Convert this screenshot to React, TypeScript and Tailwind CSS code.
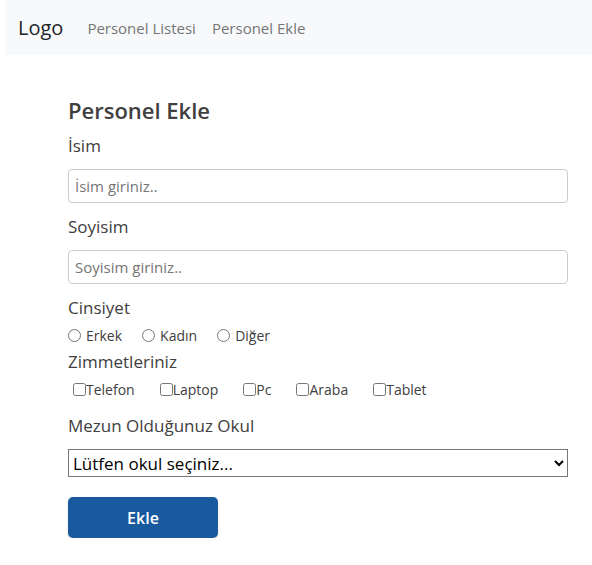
import React from "react";

const genders = ["Erkek", "Kadın", "Diğer"];
const assets = ["Telefon", "Laptop", "Pc", "Araba", "Tablet"];

function TextField({ id, label, placeholder }: { id: string; label: string; placeholder: string }) {
  return (
    <div className="mb-2.5">
      <label htmlFor={id} className="mb-2.5 block text-[17px] leading-[27px]">
        {label}
      </label>
      <input
        id={id}
        type="text"
        placeholder={placeholder}
        className="block h-[34px] w-full rounded border border-[#cccccc] bg-white px-1.5 text-[15px] placeholder:text-[#757575]"
      />
    </div>
  );
}

export default function App() {
  return (
    <div className="bg-white font-['Open_Sans','Noto_Sans',sans-serif] text-[#404040]">
      <nav className="ml-1.5 flex h-[55px] items-center bg-[#f8f9fa] px-3">
        <a href="#" className="mr-6 text-xl leading-[30px] text-[#212529]">
          Logo
        </a>
        <div className="flex gap-4 text-[15px] leading-6 text-[#757677]">
          <a href="#liste">Personel Listesi</a>
          <a href="#ekle">Personel Ekle</a>
        </div>
      </nav>

      <main className="mt-10 mr-6 ml-[68px] max-w-[500px]">
        <h1 className="mb-[7px] text-[22px] leading-[30px] font-semibold">Personel Ekle</h1>
        <form>
          <TextField id="isim" label="İsim" placeholder="İsim giriniz.." />
          <TextField id="soyisim" label="Soyisim" placeholder="Soyisim giriniz.." />

          <fieldset>
            <legend className="text-[17px] leading-[27px]">Cinsiyet</legend>
            <div className="flex gap-5 pt-0.5 text-sm leading-[25px]">
              {genders.map((name) => (
                <label key={name} className="flex items-center gap-[5px]">
                  <input type="radio" name="cinsiyet" className="size-[13px]" />
                  {name}
                </label>
              ))}
            </div>
          </fieldset>

          <fieldset className="mb-2.5">
            <legend className="text-[17px] leading-[27px]">Zimmetleriniz</legend>
            <div className="flex gap-[25px] pt-0.5 pl-[5px] text-sm leading-[25px]">
              {assets.map((name) => (
                <label key={name} className="flex items-center">
                  <input type="checkbox" className="size-[13px]" />
                  {name}
                </label>
              ))}
            </div>
          </fieldset>

          <label htmlFor="okul" className="mb-2.5 block text-[17px] leading-[27px]">
            Mezun Olduğunuz Okul
          </label>
          <select id="okul" className="mb-5 block h-7 w-full border border-[#767676] bg-white text-[17px] text-black">
            <option>Lütfen okul seçiniz...</option>
          </select>

          <button
            type="button"
            className="block h-[41px] w-[150px] rounded-[5px] bg-[#195a9e] text-base font-semibold text-white shadow"
          >
            Ekle
          </button>
        </form>
      </main>
    </div>
  );
}
